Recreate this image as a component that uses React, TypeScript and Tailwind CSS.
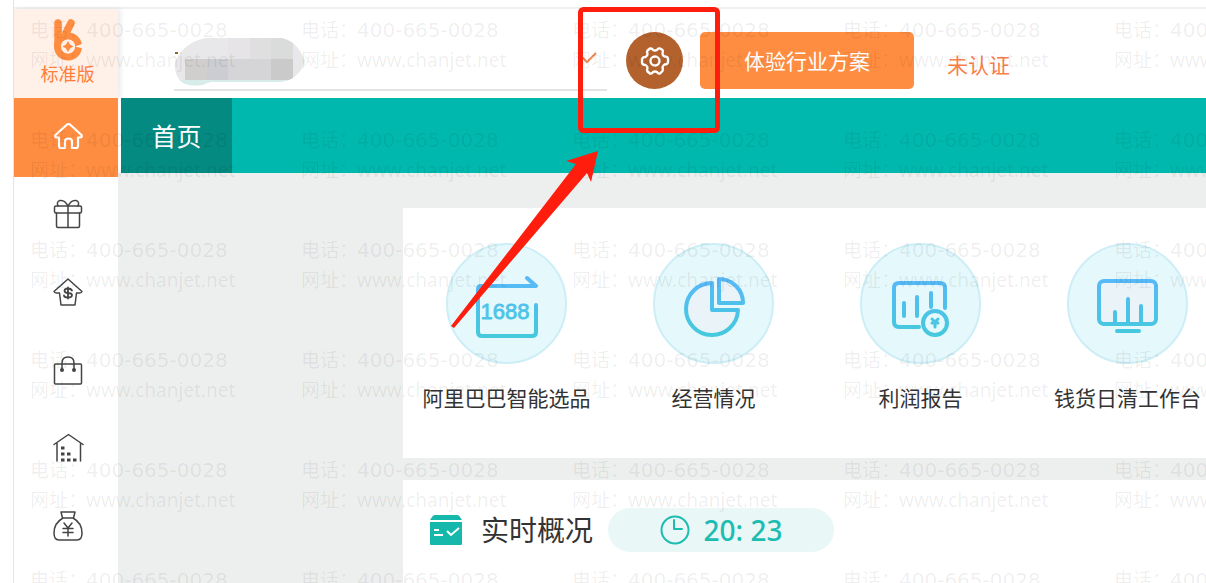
import type { ReactNode } from "react";

const line = {
  fill: "none",
  stroke: "currentColor",
  strokeWidth: 1.5,
  strokeLinecap: "round" as const,
  strokeLinejoin: "round" as const,
};

function NavIcon({ children }: { children: ReactNode }) {
  return (
    <svg viewBox="0 0 32 32" className="size-8" aria-hidden="true" {...line}>
      {children}
    </svg>
  );
}

const navItems = [
  {
    label: "首页",
    active: true,
    icon: (
      <g strokeWidth="2.2">
        <path d="M3.500 15 15 4.500q1.500-1 3 0L29.500 15q1 2.500-1.500 2.500h-2V26q0 2-2 2h-4v-6.500q0-3-3.500-3t-3.500 3V28H9q-2 0-2-2v-8.500H5q-2.500 0-1.500-2.500Z" />
      </g>
    ),
  },
  {
    label: "礼品",
    icon: (
      <>
        <rect x="2.500" y="8" width="27" height="7" rx="1.500" />
        <path d="M4.500 15v13q0 1.500 1.500 1.500h20q1.500 0 1.500-1.500V15M16 8v21.500M16 8C14 4 11 2 8 2.500S5 6 6 8M16 8c2-4 5-6 8-5.500S27 6 26 8" />
      </>
    ),
  },
  {
    label: "采购",
    icon: (
      <>
        <path d="m16 3 14 12.500q-1 2-3.500 1.500h-2L23 29H9L7.500 17h-2Q3 17.500 2 15.500Z" />
        <path
          strokeWidth="1.800"
          d="M20 14.500q-1-2-4-2t-3.500 2Q12.500 17 16 17t4 2q0 2.500-4 2.500t-4-2M16 11.500v11"
        />
      </>
    ),
  },
  {
    label: "销售",
    icon: (
      <>
        <rect x="2.500" y="10" width="27" height="20" rx="1" />
        <path d="M10 16V9q0-6 6-6t6 6v7" />
        <g fill="currentColor" stroke="none">
          <circle cx="10" cy="16" r="2" />
          <circle cx="22" cy="16" r="2" />
        </g>
      </>
    ),
  },
  {
    label: "库存",
    icon: (
      <>
        <path d="M2 12.500 16.500 2.500 31 12.500M5 11v18M28.500 11v18" />
        <path
          strokeWidth="3"
          strokeLinecap="butt"
          d="M9 16h3.500M9 22h3.500M9 28h3.500M15 22h3.500M15 28h3.500M21 28h3.500"
        />
      </>
    ),
  },
  {
    label: "资金",
    icon: (
      <>
        <path d="M9 2h14l-1.500 6h-11ZM11 8Q2 13 2 23q0 7 5 7h18q5 0 5-7 0-10-9-15" />
        <path d="m12 13 4 5 4-5M11 18.500h10M11 22.500h10M16 18v8" />
      </>
    ),
  },
];

const shortcuts = [
  {
    label: "阿里巴巴智能选品",
    icon: (
      <>
        <path d="M58 13H4q-3 0-3 3v43q0 4 4 4h50q4 0 4-4V32M50 5l9 8" />
        <text
          x="28"
          y="46"
          textAnchor="middle"
          className="fill-[#4fc4e8] font-['Liberation_Sans',sans-serif] text-[22px]"
          strokeWidth="0.800"
        >
          1688
        </text>
      </>
    ),
  },
  {
    label: "经营情况",
    icon: (
      <>
        <path fill="#e9f3f8" d="M28 10A26 26 0 1 0 54 37H28Z" />
        <path fill="#e9f3f8" d="M35 6v24h24A24 24 0 0 0 35 6Z" />
      </>
    ),
  },
  {
    label: "利润报告",
    icon: (
      <>
        <path d="M54 35V15q0-5-5-5H8q-5 0-5 5v34q0 5 5 5h20M13 30v13M26 24v19M40 20v14" />
        <circle cx="44" cy="50" r="12" />
        <path strokeWidth="3" d="m41 46 3 3 3-3M41 50h6M44 49v5" />
      </>
    ),
  },
  {
    label: "钱货日清工作台",
    icon: (
      <>
        <rect x="1" y="8" width="57" height="43" rx="5" fill="#e9f3f8" />
        <path d="M17 39v12M30 26v25M43 33v18M19 58h22" />
      </>
    ),
  },
];

function Logo() {
  return (
    <svg viewBox="0 0 30 44" className="h-11 w-[30px]" aria-hidden="true">
      <g fill="none" stroke="#ff8d41" strokeLinecap="round">
        <path strokeWidth="7.500" d="M5 5v24M18 5l-5 10" />
        <circle cx="15" cy="28.500" r="10.500" strokeWidth="7" />
      </g>
      <circle cx="15" cy="28.500" r="7" fill="#fff0e8" />
      <path fill="#ff8d41" d="m15 23 2 3.500 3.500 2-3.500 2-2 3.500-2-3.500-3.500-2 3.500-2Z" />
      <path fill="#fff0e8" d="m22 28.500 8-3v5Z" />
    </svg>
  );
}

function Sidebar() {
  return (
    <aside className="z-10 flex w-[104px] shrink-0 flex-col">
      <div className="flex h-[89px] flex-col items-center bg-[#fff0e8] pt-[9px] pl-[3px] text-[18px] leading-6 text-[#ff7f3a] shadow-[3px_0_5px_rgba(0,0,0,0.08)]">
        <Logo />
        标准版
      </div>
      <nav className="flex flex-col">
        {navItems.map((item) => (
          <a
            key={item.label}
            href="#"
            aria-label={item.label}
            className={
              item.active
                ? "flex h-[79px] items-center justify-center bg-[#ff8d41] pb-1 pl-1 text-white"
                : "flex h-[78px] items-center justify-center pb-1 pl-1 text-[#444]"
            }
          >
            <NavIcon>{item.icon}</NavIcon>
          </a>
        ))}
      </nav>
    </aside>
  );
}

// company name is pixelated
function HiddenName() {
  return (
    <svg
      viewBox="0 0 132 48"
      className="pointer-events-none absolute top-[6px] left-0 h-12 w-[132px]"
      aria-hidden="true"
    >
      <clipPath id="blob">
        <path d="M32 0h72q18 0 27 23-6 20-27 21H36q-12 6-24 2Q0 42 1 24 10 4 32 0Z" />
      </clipPath>
      <g clipPath="url(#blob)">
        <path fill="#e8e8ea" d="M0 0h132v48H0Z" />
        <path fill="#e6e4e6" d="M54 0h22v21H54Z" />
        <path fill="#dfdfe0" d="M76 0h21v21H76Z" />
        <path fill="#dadcdc" d="M97 0h22v21H97Z" />
        <path fill="#d1cfce" d="M11 21h22v21H11Z" />
        <path fill="#cccdd2" d="M33 21h21v21H33Z" />
        <path fill="#d5d4d6" d="M54 21h43v21H54Z" />
        <path fill="#cacacb" d="M97 21h22v21H97Z" />
        <path fill="#d8ecea" d="M0 42h132v6H0Z" />
      </g>
      <path fill="#8a6a2c" d="M1 14h3v2H1Z" />
    </svg>
  );
}

function Header() {
  return (
    <header className="flex h-[89px] items-start bg-white pt-[23px] pl-14">
      <div className="relative h-[59px] w-[433px] border-b-2 border-[#e4e4e4]">
        <select
          aria-label="选择账套"
          className="h-full w-full appearance-none bg-transparent outline-none"
        />
        <HiddenName />
        <svg
          viewBox="0 0 20 12"
          className="pointer-events-none absolute top-5 right-[10px] h-3 w-5"
          fill="none"
          stroke="#f08c55"
          strokeWidth="2"
          aria-hidden="true"
        >
          <path d="m1 1 9 9 9-9" />
        </svg>
      </div>
      <button
        aria-label="设置"
        className="ml-[19px] flex size-[57px] items-center justify-center rounded-full bg-[#b3622d] text-white"
      >
        <svg viewBox="0 0 32 32" className="size-8" {...line} strokeWidth="2.4">
          <path d="M11 3.500q2-.500 3 1.500 2 1 4 0 1-2 3-1.500l2.500 1.500q1 1.500 0 3.500 0 2 2 3 3 0 3.500 2v4q-.500 2-3.500 2-2 1-2 3 1 2 0 3.500L21 28.500q-2 .500-3-1.500-2-1-4 0-1 2-3 1.500L8.500 26.500q-1-1.500 0-3.500 0-2-2-3-3 0-3.500-2v-4q.500-2 3.500-2 2-1 2-3-1-2 0-3.500Z" />
          <circle cx="16" cy="16" r="4.500" />
        </svg>
      </button>
      <button className="ml-[17px] h-[57px] w-[214px] rounded-[5px] bg-[#ff8d41] pt-[2px] text-[21px] text-white">
        体验行业方案
      </button>
      <a href="#" className="ml-[33px] flex h-[68px] items-center text-[21px] text-[#fa7f4a]">
        未认证
      </a>
    </header>
  );
}

function Watermark() {
  return (
    <div
      aria-hidden="true"
      className="pointer-events-none absolute inset-0 z-20 overflow-hidden"
    >
      <div className="mt-[15px] -mr-[271px] ml-[30px] grid auto-rows-[110px] grid-cols-[repeat(auto-fill,271px)] text-[19px] leading-[30px] text-black/7">
        {Array.from({ length: 30 }, (_, i) => (
          <div key={i} className="whitespace-nowrap">
            <div className="flex">
              <span className="w-14">电话：</span>
              <span className="font-['DejaVu_Sans',sans-serif] text-[20px]">400-665-0028</span>
            </div>
            <div className="flex">
              <span className="w-14">网址：</span>
              <span>www.chanjet.net</span>
            </div>
          </div>
        ))}
      </div>
    </div>
  );
}

function Annotation() {
  return (
    <svg
      viewBox="0 0 270 322"
      className="pointer-events-none absolute top-[7px] left-[450px] z-30 h-[322px] w-[270px]"
      aria-hidden="true"
    >
      <rect x="130.500" y="2.500" width="137" height="121" rx="3" fill="none" stroke="#ff1d0e" strokeWidth="5" />
      <path fill="#ff1d0e" d="m148 144-32 10 10 3L1 319l3 2 133-155 4 9Z" />
    </svg>
  );
}

export default function App() {
  return (
    <div className="relative flex min-h-screen overflow-hidden bg-white pl-[13px] font-['Noto_Sans','Noto_Sans_CJK_SC',sans-serif]">
      <svg className="absolute size-0" aria-hidden="true">
        <linearGradient id="sky" gradientUnits="userSpaceOnUse" x1="0" y1="6" x2="0" y2="62">
          <stop offset="0" stopColor="#57b9f8" />
          <stop offset="1" stopColor="#45c9dc" />
        </linearGradient>
      </svg>
      <div className="flex min-w-0 flex-1 border-l border-[#e3e5e5] pt-[7px]">
        <div className="flex min-w-0 flex-1 border-t-2 border-[#eef1f1]">
          <Sidebar />
          <div className="flex min-w-0 flex-1 flex-col">
            <Header />
            <div className="flex h-[75px] bg-white pl-[3px]">
              <div className="flex flex-1 bg-[#00b8ae]">
                <button className="w-[111px] bg-[#048a80] pt-[2px] text-[25px] text-white">
                  首页
                </button>
              </div>
            </div>
            <main className="flex flex-1 flex-col gap-[22px] bg-[#edefee] pt-[35px] pl-[285px]">
              <section className="flex h-[250px] overflow-hidden bg-white pt-[35px]">
                {shortcuts.map((item) => (
                  <a
                    key={item.label}
                    href="#"
                    className="flex w-[207px] shrink-0 flex-col items-center gap-[18px] text-[21px] leading-8 whitespace-nowrap text-[#333]"
                  >
                    <span className="flex size-[121px] items-center justify-center rounded-full border-2 border-[#cdeef6] bg-[#e5f8fc] pt-1">
                      <svg
                        viewBox="-2 0 64 66"
                        className="h-[66px] w-16"
                        aria-hidden="true"
                        {...line}
                        stroke="url(#sky)"
                        strokeWidth="4"
                      >
                        {item.icon}
                      </svg>
                    </span>
                    {item.label}
                  </a>
                ))}
              </section>
              <section className="flex flex-1 items-start bg-white pt-7 pl-[27px]">
                <h2 className="flex h-11 items-center gap-[19px] text-[28px] font-normal text-[#333]">
                  <svg viewBox="0 0 32 30" className="h-[30px] w-8" aria-hidden="true">
                    <path fill="#16b8ac" d="M5 0h22q2 0 3 2l2 3H0l2-3q1-2 3-2ZM0 7h32v22q0 1-1 1H1q-1 0-1-1Z" />
                    <path fill="none" stroke="#fff" strokeWidth="2" d="M4 15h5M4 20h9M17 16l4 4 8-7" />
                  </svg>
                  实时概况
                </h2>
                <div className="ml-[15px] flex h-11 w-[226px] items-center justify-center gap-[14px] rounded-full bg-[#e9f7f6] text-[28px] font-medium text-[#1dbcb2]">
                  <svg viewBox="0 0 30 30" className="size-[30px]" {...line} strokeWidth="2" aria-hidden="true">
                    <circle cx="15" cy="15" r="13.500" />
                    <path d="M14 5v9h8" />
                  </svg>
                  <time>20: 23</time>
                </div>
              </section>
            </main>
          </div>
        </div>
      </div>
      <Watermark />
      <Annotation />
    </div>
  );
}
